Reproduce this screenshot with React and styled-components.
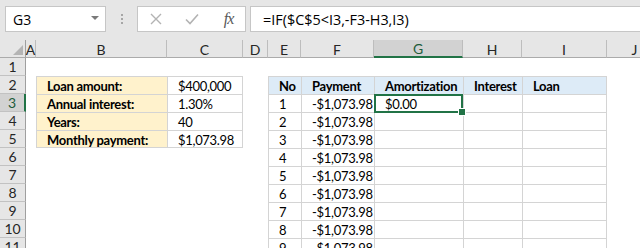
import React from "react";
import styled, { createGlobalStyle, css } from "styled-components";

const GREEN = "#217346";
const LINE = "#d4d4d4";

const COLS = [
  { id: "A", w: 10 },
  { id: "B", w: 131 },
  { id: "C", w: 76 },
  { id: "D", w: 25 },
  { id: "E", w: 33 },
  { id: "F", w: 73 },
  { id: "G", w: 89 },
  { id: "H", w: 59 },
  { id: "I", w: 85 },
  { id: "J", w: 56 },
];

const ROWS = [1, 2, 3, 4, 5, 6, 7, 8, 9, 10, 11];

const loanInfo = [
  ["Loan amount:", "$400,000"],
  ["Annual interest:", "1.30%"],
  ["Years:", "40"],
  ["Monthly payment:", "$1,073.98"],
];

const headers = ["No", "Payment", "Amortization", "Interest", "Loan"];
const payment = "-$1,073.98";

const active = { row: 3, col: "G" };

const GlobalStyle = createGlobalStyle`
  html, body {
    margin: 0;
    padding: 0;
    background: #fff;
  }
  body {
    font-family: Lato, "Liberation Sans", sans-serif;
  }
`;

const Window = styled.div`
  width: 640px;
  height: 248px;
  overflow: hidden;
  background: #fff;
  display: flex;
  flex-direction: column;
`;

const FormulaBar = styled.div`
  flex: none;
  height: 40px;
  box-sizing: border-box;
  padding: 6px 0 0 5px;
  background: #e6e6e6;
  display: flex;
  align-items: flex-start;
`;

const NameBox = styled.div`
  width: 101px;
  height: 26px;
  box-sizing: border-box;
  background: #fff;
  border: 1px solid #c6c6c6;
  padding: 0 6px 0 7px;
  display: flex;
  align-items: center;
  justify-content: space-between;
  font-family: "Open Sans", sans-serif;
  font-size: 14px;
  color: #000;
`;

const Caret = styled.span`
  width: 0;
  height: 0;
  border-left: 4px solid transparent;
  border-right: 4px solid transparent;
  border-top: 4px solid #7a7a7a;
  margin-bottom: 2px;
`;

const Grip = styled.div`
  width: 2px;
  margin: 8px 14px 0 15px;
  display: flex;
  flex-direction: column;
  gap: 2px;
  span {
    width: 2px;
    height: 2px;
    background: #a6a6a6;
  }
`;

const FxBox = styled.div`
  width: 109px;
  height: 26px;
  box-sizing: border-box;
  background: #fff;
  border: 1px solid #c6c6c6;
  display: grid;
  grid-template-columns: 36px 36px 1fr;
  align-items: center;
  justify-items: center;
`;

const Fx = styled.span`
  font-family: "Liberation Serif", serif;
  font-style: italic;
  font-size: 16px;
  color: #595959;
  letter-spacing: -1px;
  margin-left: 2px;
`;

const FormulaInput = styled.div`
  flex: 1;
  height: 26px;
  margin-left: 4px;
  box-sizing: border-box;
  background: #fff;
  border: 1px solid #c6c6c6;
  border-right: none;
  padding-left: 12px;
  display: flex;
  align-items: center;
  font-family: "Open Sans", sans-serif;
  font-size: 14.4px;
  color: #000;
  white-space: nowrap;
`;

const Sheet = styled.div`
  display: grid;
  grid-template-columns: 26px ${({ $widths }) => $widths};
  grid-auto-rows: 18px;
  font-size: 13px;
`;

const Corner = styled.div`
  background: #e6e6e6;
  border-right: 1px solid #9f9f9f;
  border-bottom: 1px solid #ababab;
  box-sizing: border-box;
  display: flex;
  align-items: flex-end;
  justify-content: flex-end;
  padding: 0 2px 2px 0;
`;

const CornerMark = styled.span`
  width: 0;
  height: 0;
  border-left: 10px solid transparent;
  border-bottom: 10px solid #b4b4b4;
`;

const ColHeader = styled.div`
  box-sizing: border-box;
  background: ${({ $on }) => ($on ? "#d2d2d2" : "#e6e6e6")};
  border-right: 1px solid #bdbdbd;
  border-bottom: ${({ $on }) => ($on ? `2px solid ${GREEN}` : "1px solid #ababab")};
  display: flex;
  align-items: center;
  justify-content: center;
  font-size: 14px;
  color: ${({ $on }) => ($on ? "#1e5c3a" : "#262626")};
  padding-top: 1px;
`;

const RowHeader = styled.div`
  box-sizing: border-box;
  background: ${({ $on }) => ($on ? "#d2d2d2" : "#e6e6e6")};
  border-bottom: 1px solid #c2c2c2;
  border-right: ${({ $on }) => ($on ? `2px solid ${GREEN}` : "1px solid #9f9f9f")};
  display: flex;
  align-items: center;
  justify-content: center;
  font-size: 14px;
  color: ${({ $on }) => ($on ? "#1e5c3a" : "#262626")};
`;

const fills = {
  input: "#fff2cc",
  head: "#ddebf7",
  plain: "#fff",
};

const Cell = styled.div`
  position: relative;
  box-sizing: border-box;
  display: flex;
  align-items: center;
  padding: 1px 0 0 10px;
  white-space: nowrap;
  letter-spacing: -0.3px;
  color: #000;
  background: ${({ $tone }) => fills[$tone] || "#fff"};
  font-weight: ${({ $bold }) => ($bold ? 700 : 400)};
  ${({ $boxed }) =>
    $boxed &&
    css`
      border-top: 1px solid ${LINE};
      border-left: 1px solid ${LINE};
    `}
  ${({ $lastCol }) => $lastCol && `border-right: 1px solid ${LINE};`}
  ${({ $lastRow }) => $lastRow && `border-bottom: 1px solid ${LINE};`}
`;

const Selection = styled.div`
  position: absolute;
  left: -1px;
  top: -1px;
  right: 0;
  bottom: -1px;
  border: 2px solid ${GREEN};
  z-index: 2;
  pointer-events: none;
`;

const Handle = styled.span`
  position: absolute;
  right: -5px;
  bottom: -5px;
  width: 6px;
  height: 6px;
  background: ${GREEN};
  border: 1px solid #fff;
`;

function getCell(row, col) {
  const ci = COLS.findIndex((c) => c.id === col);
  if (row >= 2 && row <= 5 && (col === "B" || col === "C")) {
    const [label, value] = loanInfo[row - 2];
    return {
      text: col === "B" ? label : value,
      tone: col === "B" ? "input" : "plain",
      bold: col === "B",
      boxed: true,
      lastCol: col === "C",
      lastRow: row === 5,
    };
  }
  if (row >= 2 && ci >= 4 && ci <= 8) {
    const k = ci - 4;
    if (row === 2) {
      return { text: headers[k], tone: "head", bold: true, boxed: true, lastCol: k === 4 };
    }
    const n = row - 2;
    let text = "";
    if (k === 0) text = String(n);
    if (k === 1) text = payment;
    if (k === 2 && n === 1) text = "$0.00";
    return { text, tone: "plain", boxed: true, lastCol: k === 4 };
  }
  return {};
}

const CrossIcon = () => (
  <svg width="12" height="12" viewBox="0 0 12 12">
    <path d="M1 1 L11 11 M11 1 L1 11" stroke="#b3b3b3" strokeWidth="1.4" fill="none" />
  </svg>
);

const CheckIcon = () => (
  <svg width="14" height="12" viewBox="0 0 14 12">
    <path d="M1 6.5 L5 10.5 L13 1.5" stroke="#b3b3b3" strokeWidth="1.6" fill="none" />
  </svg>
);

export default function App() {
  const widths = COLS.map((c) => `${c.w}px`).join(" ");

  return (
    <Window>
      <GlobalStyle />
      <FormulaBar>
        <NameBox>
          G3
          <Caret />
        </NameBox>
        <Grip>
          <span />
          <span />
          <span />
        </Grip>
        <FxBox>
          <CrossIcon />
          <CheckIcon />
          <Fx>fx</Fx>
        </FxBox>
        <FormulaInput>=IF($C$5&lt;I3,-F3-H3,I3)</FormulaInput>
      </FormulaBar>

      <Sheet $widths={widths}>
        <Corner>
          <CornerMark />
        </Corner>
        {COLS.map((c) => (
          <ColHeader key={c.id} $on={c.id === active.col}>
            {c.id}
          </ColHeader>
        ))}
        {ROWS.map((r) => (
          <React.Fragment key={r}>
            <RowHeader $on={r === active.row}>{r}</RowHeader>
            {COLS.map((c) => {
              const cell = getCell(r, c.id);
              const isActive = r === active.row && c.id === active.col;
              return (
                <Cell
                  key={c.id}
                  $tone={cell.tone}
                  $bold={cell.bold}
                  $boxed={cell.boxed}
                  $lastCol={cell.lastCol}
                  $lastRow={cell.lastRow}
                >
                  {cell.text}
                  {isActive && (
                    <Selection>
                      <Handle />
                    </Selection>
                  )}
                </Cell>
              );
            })}
          </React.Fragment>
        ))}
      </Sheet>
    </Window>
  );
}
